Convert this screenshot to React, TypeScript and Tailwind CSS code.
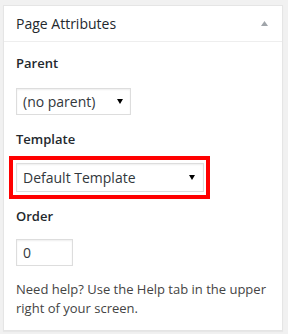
import React from "react";

/* -------------------------------------------------------------------------- */

const font = { fontFamily: '"Open Sans", "Liberation Sans", sans-serif' };

const DownArrow = () => (
  <svg width="6" height="5" viewBox="0 0 6 5" className="shrink-0">
    <path d="M0 0 H6 L3 5 Z" fill="#000" />
  </svg>
);

type SelectProps = {
  value: string;
  className?: string;
};

const FakeSelect = ({ value, className }: SelectProps) => (
  <div
    className={`flex items-center justify-between border border-[#dddddd] bg-white pl-[6px] pr-[7px] text-[14px] text-[#32373c] shadow-[inset_0_1px_2px_rgba(0,0,0,0.07)] ${className}`}
  >
    <span className="leading-none">{value}</span>
    <DownArrow />
  </div>
);

const Label = ({ children, className }: { children: React.ReactNode; className?: string }) => (
  <p className={`text-[13px] leading-[18px] font-semibold text-[#23282d] ${className}`}>
    {children}
  </p>
);

export default function App() {
  return (
    <div
      style={font}
      className="h-[334px] w-[288px] bg-[#f1f1f1] pt-[5px] pl-[3px]"
    >
      <div className="h-[326px] w-[280px] border border-[#e5e5e5] bg-white shadow-[0_1px_1px_rgba(0,0,0,0.04)]">
        {/* header */}
        <div className="flex h-[36px] items-center justify-between border-b border-[#eeeeee] pl-[12px] pr-[14px]">
          <h2 className="text-[14px] leading-none text-[#23282d]">Page Attributes</h2>
          <svg width="7" height="5" viewBox="0 0 7 5">
            <path d="M3.5 0 L7 5 H0 Z" fill="#a0a5aa" />
          </svg>
        </div>

        {/* body */}
        <div className="px-[12px] pt-[12px]">
          <Label>Parent</Label>
          <FakeSelect value="(no parent)" className="mt-[16px] h-[27px] w-[115px]" />

          <Label className="mt-[15px]">Template</Label>
          <div className="mt-[8px] -ml-[7px] w-[201px] border-4 border-[#ff0000] py-[3px] pr-[2px] pl-[3px]">
            <FakeSelect value="Default Template" className="h-[29px] w-full pr-[8px]" />
          </div>

          <Label className="mt-[8px]">Order</Label>
          <div className="mt-[14px] flex h-[27px] w-[57px] items-center border border-[#dddddd] pl-[6px] text-[14px] text-[#32373c] shadow-[inset_0_1px_2px_rgba(0,0,0,0.07)]">
            0
          </div>

          <p className="mt-[14px] text-[13px] leading-[19px] text-[#444444]">
            Need help? Use the Help tab in the upper right of your screen.
          </p>
        </div>
      </div>
    </div>
  );
}
